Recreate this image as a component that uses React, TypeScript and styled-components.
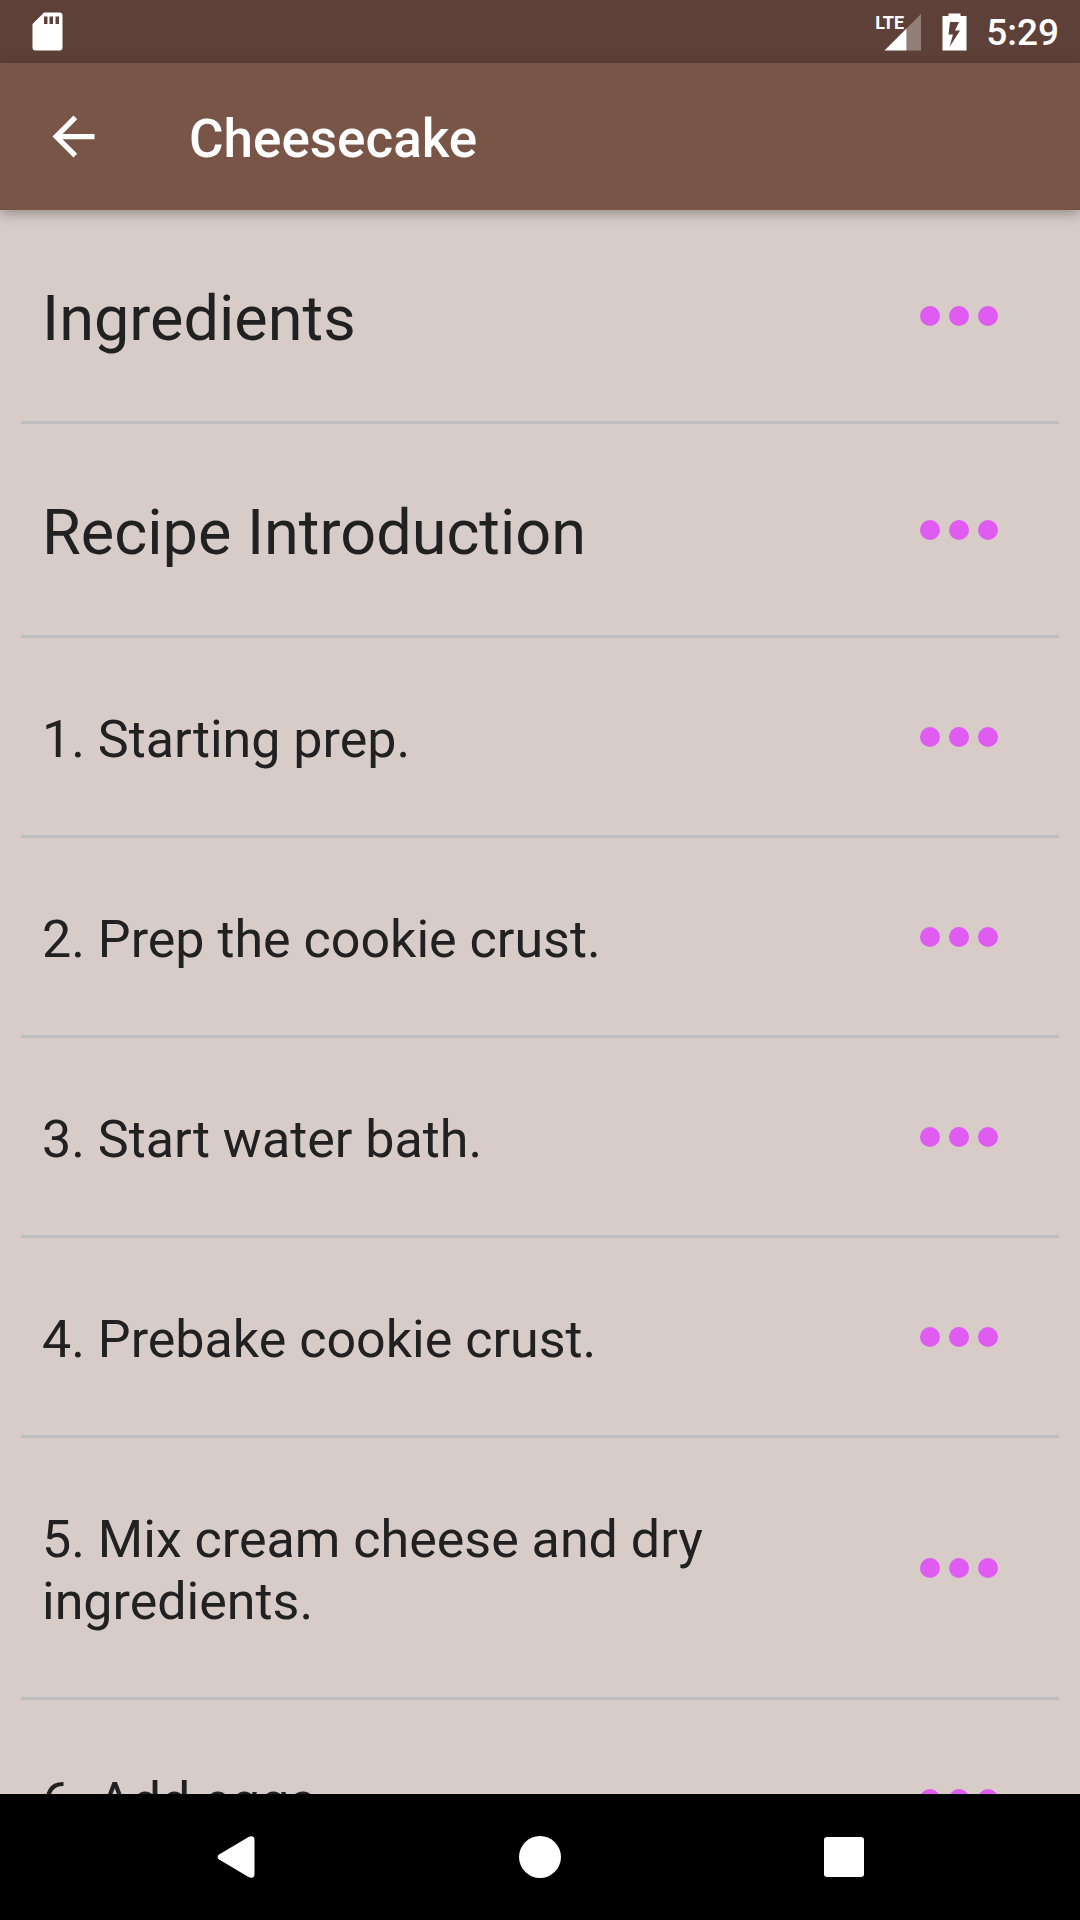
import React from "react";
import styled, { createGlobalStyle } from "styled-components";

const GlobalStyle = createGlobalStyle`
  *, *::before, *::after {
    box-sizing: border-box;
  }
  body {
    margin: 0;
    background: #d7ccc8;
    font-family: Roboto, "Noto Sans", sans-serif;
    color: #212121;
  }
`;

const Screen = styled.div`
  display: flex;
  flex-direction: column;
  height: 100vh;
  overflow: hidden;
`;

const StatusBar = styled.div`
  display: flex;
  flex: none;
  align-items: center;
  justify-content: space-between;
  height: 63px;
  padding: 0 21px 0 32px;
  background: #5d4037;
  color: #ffffff;
`;

const StatusGroup = styled.div`
  display: flex;
  align-items: center;
`;

const Signal = styled.div`
  display: flex;
  align-items: flex-start;
  height: 38px;
  margin-right: 21px;
`;

const NetworkType = styled.span`
  margin-right: -20px;
  font-size: 18px;
  font-weight: 700;
  line-height: 20px;
`;

const Clock = styled.time`
  margin-left: 19px;
  padding-top: 2px;
  font-size: 37px;
  font-weight: 500;
  line-height: 44px;
`;

const Toolbar = styled.header`
  position: relative;
  z-index: 1;
  display: flex;
  flex: none;
  align-items: center;
  gap: 42px;
  height: 147px;
  padding: 0 42px 0 0;
  background: #795548;
  box-shadow: 0 4px 12px rgba(0, 0, 0, 0.3);
  color: #ffffff;
`;

const IconButton = styled.button`
  display: flex;
  align-items: center;
  justify-content: center;
  width: 147px;
  height: 147px;
  padding: 0;
  border: 0;
  background: none;
  color: inherit;
  cursor: pointer;
`;

const Title = styled.h1`
  margin: 0;
  padding-top: 5px;
  font-size: 53px;
  font-weight: 500;
  line-height: 62px;
`;

const StepList = styled.ul`
  flex: 1;
  min-height: 0;
  margin: 0;
  padding: 0 21px;
  overflow-y: auto;
  scrollbar-width: none;
  list-style: none;
`;

const StepRow = styled.li`
  display: flex;
  align-items: center;
  padding: 64px 0 63px;
  border-bottom: 3px solid #bdbdbd;
`;

const StepLabel = styled.span<{ $heading?: boolean }>`
  flex: 1;
  padding: ${(p) => (p.$heading ? "8px 0 2px 21px" : "7px 0 1px 21px")};
  font-size: ${(p) => (p.$heading ? 63 : 52)}px;
  line-height: ${(p) => (p.$heading ? 74 : 62)}px;
`;

const MoreButton = styled.button`
  display: flex;
  flex: none;
  align-items: center;
  justify-content: center;
  gap: 9px;
  width: 200px;
  height: 63px;
  padding: 0;
  border: 0;
  background: none;
  cursor: pointer;
`;

const Dot = styled.span`
  width: 20px;
  height: 20px;
  border-radius: 50%;
  background: #df5bf2;
`;

const NavBar = styled.nav`
  display: flex;
  flex: none;
  height: 126px;
  padding: 0 84px;
  background: #000000;
`;

const NavButton = styled.button`
  display: flex;
  flex: 1;
  align-items: center;
  justify-content: center;
  padding: 0;
  border: 0;
  background: none;
  cursor: pointer;
`;

type Step = { label: string; heading?: boolean };

const steps: Step[] = [
  { label: "Ingredients", heading: true },
  { label: "Recipe Introduction", heading: true },
  { label: "1. Starting prep." },
  { label: "2. Prep the cookie crust." },
  { label: "3. Start water bath." },
  { label: "4. Prebake cookie crust." },
  { label: "5. Mix cream cheese and dry ingredients." },
  { label: "6. Add eggs." },
];

const SdCardIcon = () => (
  <svg width="31" height="39" viewBox="0 0 31 39" fill="#fff" aria-hidden="true">
    <path
      fillRule="evenodd"
      d="M12 0.5H27.5a3 3 0 0 1 3 3V35.500a3 3 0 0 1-3 3H3.500a3 3 0 0 1-3-3V12ZM12 4.500v7.500h3.500v-7.500ZM17.500 4.500v7.500h3.500v-7.500ZM23.500 4.500v7.500h3.500v-7.500Z"
    />
  </svg>
);

const SignalIcon = () => (
  <svg width="37" height="38" viewBox="0 0 37 38" fill="#fff" aria-hidden="true">
    <path d="M37 1V37.500H22.500V15.500Z" opacity="0.33" />
    <path d="M22.500 15.500V37.500H0.500Z" />
  </svg>
);

const BatteryIcon = () => (
  <svg width="25" height="38" viewBox="0 0 25 38" fill="#fff" aria-hidden="true">
    <path
      fillRule="evenodd"
      d="M6.500 0.500H18.500V3H24.500V37.500H0.500V3H6.500ZM8 9L6.500 21.500H11L7.500 34L18 17.500H13L17 9Z"
    />
  </svg>
);

const App: React.FC = () => (
  <>
    <GlobalStyle />
    <Screen>
      <StatusBar>
        <SdCardIcon />
        <StatusGroup>
          <Signal>
            <NetworkType>LTE</NetworkType>
            <SignalIcon />
          </Signal>
          <BatteryIcon />
          <Clock>5:29</Clock>
        </StatusGroup>
      </StatusBar>

      <Toolbar>
        <IconButton type="button" aria-label="Navigate up">
          <svg width="63" height="63" viewBox="0 0 24 24" fill="currentColor" aria-hidden="true">
            <path d="M20 11H7.830l5.590-5.590L12 4l-8 8 8 8 1.410-1.410L7.830 13H20v-2z" />
          </svg>
        </IconButton>
        <Title>Cheesecake</Title>
      </Toolbar>

      <StepList>
        {steps.map(({ label, heading }) => (
          <StepRow key={label}>
            <StepLabel $heading={heading}>{label}</StepLabel>
            <MoreButton type="button" aria-label={`Open ${label}`}>
              <Dot />
              <Dot />
              <Dot />
            </MoreButton>
          </StepRow>
        ))}
      </StepList>

      <NavBar>
        <NavButton type="button" aria-label="Back">
          <svg width="38" height="42" viewBox="0 0 38 42" aria-hidden="true">
            <path
              d="M2 18.500L32 0.700Q37.500-1 37.500 4V38Q37.500 43 32 41.300L2 23.500Q-1 21 2 18.500Z"
              fill="#fff"
            />
          </svg>
        </NavButton>
        <NavButton type="button" aria-label="Home">
          <svg width="42" height="42" viewBox="0 0 42 42" aria-hidden="true">
            <circle cx="21" cy="21" r="21" fill="#fff" />
          </svg>
        </NavButton>
        <NavButton type="button" aria-label="Recent apps">
          <svg width="40" height="40" viewBox="0 0 40 40" aria-hidden="true">
            <rect width="40" height="40" rx="3" fill="#fff" />
          </svg>
        </NavButton>
      </NavBar>
    </Screen>
  </>
);

export default App;
